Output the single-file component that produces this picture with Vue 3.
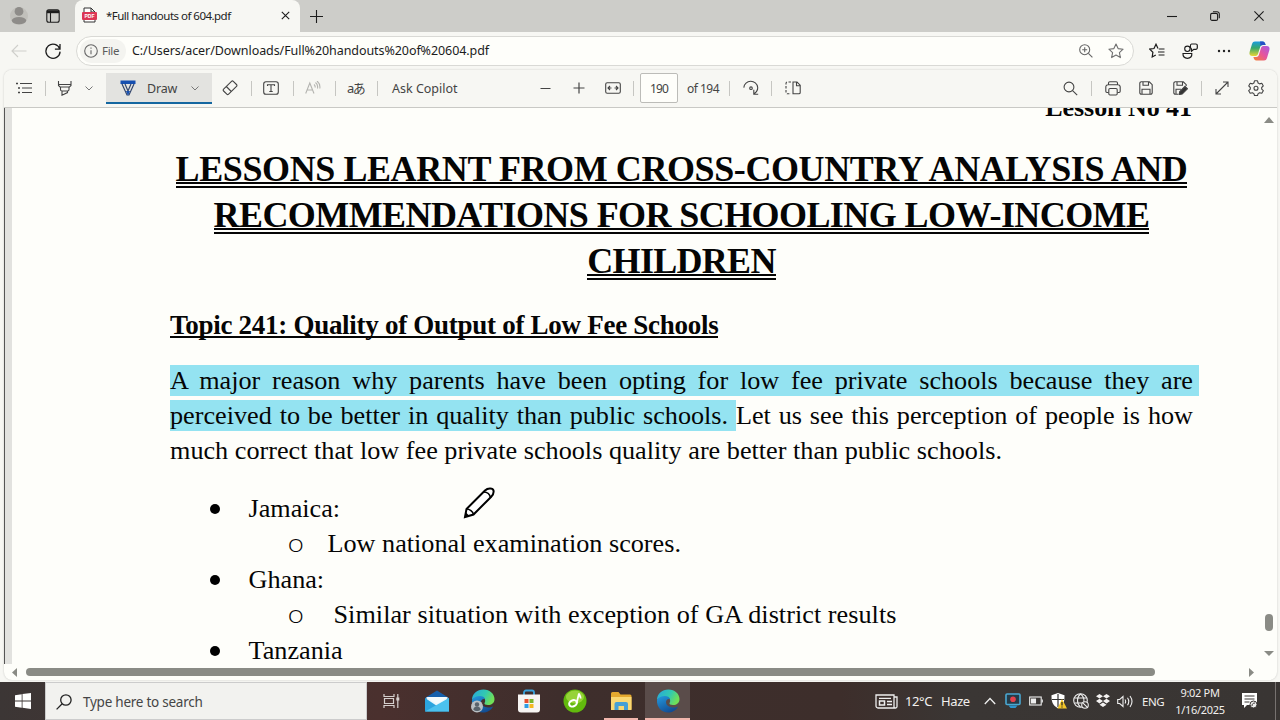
<script setup>
const sections = [
  { name: 'Jamaica:', note: 'Low national examination scores.', cls: 'jamaica' },
  { name: 'Ghana:', note: 'Similar situation with exception of GA district results', cls: 'ghana' },
  { name: 'Tanzania', note: '', cls: 'tanzania' },
]
</script>

<template>
  <div class="screen">
    <header class="tabstrip">
      <svg class="avatar" width="18" height="22" viewBox="0 0 18 22"><circle cx="9" cy="11" r="9" fill="#c1c0bb"/><circle cx="9" cy="6.400" r="4.400" fill="#8e8c89"/><ellipse cx="9" cy="15.600" rx="7.200" ry="3.700" fill="#8e8c89"/></svg>
      <svg class="ln dark" width="14" height="14" viewBox="0 0 14 14"><rect x=".8" y=".8" width="12.400" height="12.400" rx="2"/><path d="M1 2.700h12" stroke-width="3"/><path d="M4.500 3v10"/></svg>
      <div class="tab">
        <svg width="15" height="16" viewBox="0 0 15 16"><path d="M2 5V1h7l4 4v10H2v-3" fill="#fff" stroke="#333" stroke-width="1"/><path d="M9 1v4h4" fill="none" stroke="#333"/><rect y="5" width="15" height="8" rx="1" fill="#dc3654"/><text x="7.5" y="11" text-anchor="middle" class="pdf">PDF</text></svg>
        <span class="tabtitle">*Full handouts of 604.pdf</span>
        <svg class="ln dark" width="9" height="9" viewBox="0 0 9 9"><path d="M.8.8l7.400 7.400M8.200.8L.8 8.200"/></svg>
      </div>
      <svg class="ln dark" width="13" height="13" viewBox="0 0 13 13"><path d="M6.500 0v13M0 6.500h13"/></svg>
      <svg class="ln dark" width="10" height="10" viewBox="0 0 10 10"><path d="M0 5.500h10"/></svg>
      <svg class="ln dark" width="10" height="10" viewBox="0 0 10 10"><rect x=".6" y="2.400" width="7" height="7" rx="1.500"/><path d="M3 .7h4a2.200 2.200 0 0 1 2.300 2.200v4.300"/></svg>
      <svg class="ln dark" width="10" height="10" viewBox="0 0 10 10"><path d="M.4.4l9.200 9.200M9.600.4L.4 9.600"/></svg>
    </header>

    <nav class="address">
      <svg class="ln" width="16" height="14" viewBox="0 0 16 14" stroke="#cfcfcb"><path d="M15.500 7H1M7 1L1 7l6 6"/></svg>
      <svg class="ln dark" width="16" height="16" viewBox="0 0 16 16"><path d="M14.800 6.100A7.100 7.100 0 1 0 15.100 8.600M15 1v5.200H9.900" stroke-width="1.300"/></svg>
      <div class="urlbox">
        <div class="filechip">
          <svg class="ln" width="14" height="14" viewBox="0 0 14 14" stroke="#666"><circle cx="7" cy="7" r="6.300"/><path d="M7 6.200v4M7 3.500v1.300"/></svg>
          <span>File</span>
        </div>
        <span class="url">C:/Users/acer/Downloads/Full%20handouts%20of%20604.pdf</span>
        <svg class="ln" width="14" height="14" viewBox="0 0 14 14" stroke="#666"><circle cx="5.700" cy="5.700" r="5"/><path d="M9.400 9.400L13.400 13.400M3.200 5.700h5M5.700 3.200v5"/></svg>
        <svg class="ln star" width="16" height="16" viewBox="0 0 16 16" stroke="#707070"><path d="M8 1l2.100 4.600 5 .6-3.700 3.400 1 5L8 12.100 3.600 14.600l1-5L.9 6.200l5-.6z" stroke-linejoin="round"/></svg>
      </div>
      <svg class="ln dark" width="16" height="16" viewBox="0 0 16 16"><path d="M9 5.500L7 1.200 5 5.500l-4.300.6L3.900 9.200 3.200 14l3.600-2M9.800 6h5.700M9 9h6.500M9.600 12h5.900" stroke-width="1.200"/></svg>
      <svg class="ln dark" width="16" height="16" viewBox="0 0 16 16"><circle cx="5.400" cy="5.800" r="2.700"/><path d="M1 10.500h8.800c.3 3-1.400 4.800-4.400 4.800S.8 13.500 1 10.500zM9.500 1h4.300a1.500 1.500 0 0 1 1.500 1.500v2.300a1.500 1.500 0 0 1-1.500 1.500h-2L9.500 8.300V6C8 5 8 1 9.500 1z" stroke-width="1.200"/></svg>
      <svg width="14" height="4" viewBox="0 0 14 4" fill="#222"><circle cx="2" cy="2" r="1.200"/><circle cx="7" cy="2" r="1.200"/><circle cx="12" cy="2" r="1.200"/></svg>
      <svg width="21" height="20" viewBox="0 0 21 20">
        <defs>
          <linearGradient id="cpa" x1="0" y1="0" x2="0" y2="1"><stop offset="0" stop-color="#1a9be0"/><stop offset=".45" stop-color="#36a86b"/><stop offset="1" stop-color="#e9d534"/></linearGradient>
          <linearGradient id="cpb" x1="1" y1="0" x2="0" y2="1"><stop offset="0" stop-color="#a45be6"/><stop offset=".5" stop-color="#e7559b"/><stop offset="1" stop-color="#f4822f"/></linearGradient>
        </defs>
        <path d="M6 .5h7.500c2 0 2.500 1.500 3.100 3.500h-2.800c-1.500 0-2.200.7-2.700 2.200L9 13c-.6 1.600-1.500 2-2.800 2H3.500C1 15 0 13.500.6 11L3 3C3.500 1.300 4.500.5 6 .5z" fill="url(#cpa)"/>
        <path d="M15 19.500H7.500c-2 0-2.500-1.500-3.100-3.500h2.800c1.500 0 2.200-.7 2.700-2.200L12 7c.6-1.600 1.500-2 2.800-2h2.700c2.500 0 3.500 1.500 2.900 4L18 17c-.5 1.700-1.500 2.500-3 2.500z" fill="url(#cpb)"/>
        <path d="M11 .5h2.500c2 0 2.500 1.500 3.100 3.500h-2.800c-1 0-1.700.4-2.200 1.200z" fill="#2550c5"/>
      </svg>
    </nav>

    <section class="viewer">
      <div class="toolbar">
        <svg class="ln" width="17" height="12" viewBox="0 0 17 12"><path d="M4 1.500h12M6 6h10M6 10.500h10"/><path d="M0 1.500h2M2 6h2M2 10.500h2" stroke-width="1.600"/></svg>
        <i class="sep"></i>
        <svg class="ln" width="16" height="16" viewBox="0 0 16 16"><path d="M1.500 1v4.500L3 7h9.500L14 5.500V1M1.500 4.500H14M3.500 7.200v2.300a1.500 1.500 0 0 0 1.500 1.500h5.500a1.500 1.500 0 0 0 1.500-1.500V7.200M5 11v4.200l5.500-2.600V11"/></svg>
        <svg class="ln thin" width="8" height="5" viewBox="0 0 8 5"><path d="M.5.5L4 4 7.500.5"/></svg>
        <div class="draw">
          <svg width="16" height="16" viewBox="0 0 16 16"><path d="M.5.500h15v3.500h-15z" fill="#164fb0"/><path d="M2 4l5 11h2l5-11M5 4l3 7 3-7" fill="none" stroke="#33466d" stroke-width="1.200"/><path d="M6 11h4l-2 4.500z" fill="#164fb0"/></svg>
          <span>Draw</span>
          <svg class="ln thin" width="8" height="5" viewBox="0 0 8 5"><path d="M.5.5L4 4 7.500.5"/></svg>
        </div>
        <svg class="ln" width="16" height="16" viewBox="0 0 16 16"><path d="M9.500 1.300L1.600 9.200a1.300 1.300 0 0 0 0 1.800l3.200 3.200a1.300 1.300 0 0 0 1.800 0l7.900-7.900a1.300 1.300 0 0 0 0-1.800l-3.200-3.200a1.300 1.300 0 0 0-1.800 0zM4.300 6.500l5 5"/></svg>
        <i class="sep"></i>
        <svg class="ln" width="16" height="14" viewBox="0 0 16 14"><rect x=".7" y=".7" width="14.600" height="12.600" rx="2.300"/><path d="M4.500 5V3.800h7V5M8 3.800v6.800M6.300 10.500h3.400"/></svg>
        <i class="sep"></i>
        <svg class="ln pale" width="16" height="14" viewBox="0 0 16 14"><path d="M.7 12.500L4.800 2l4.200 10.500M2.100 9h5.500M9 3.500c1 .8 1.300 2 1 3M10.500 1.500c2 1.500 2.500 3.500 2 6M12 0c2.500 2 3.300 4.500 2.800 7.500"/></svg>
        <i class="sep"></i>
        <span class="translate">aあ</span>
        <i class="sep"></i>
        <span class="ask">Ask Copilot</span>
        <svg class="ln" width="11" height="11" viewBox="0 0 11 11"><path d="M.5 5.500h10"/></svg>
        <svg class="ln" width="12" height="12" viewBox="0 0 12 12"><path d="M.5 6h11M6 .5v11" stroke-width="1.200"/></svg>
        <svg class="ln" width="16" height="12" viewBox="0 0 16 12"><rect x=".7" y=".7" width="14.600" height="10.600" rx="1.500"/><path d="M3 6h3.500M9.500 6H13M5 4L3 6l2 2M11 4l2 2-2 2"/></svg>
        <i class="sep"></i>
        <span class="pageno">190</span>
        <span class="total">of 194</span>
        <i class="sep"></i>
        <svg class="ln" width="16" height="16" viewBox="0 0 16 16"><path d="M.8 7.600A7 7 0 0 1 14.700 7.300c.2 2.600-1 4.600-3.200 6.200M10.800 9.800v4.400h4.400"/><circle cx="8" cy="8.200" r="1.300"/></svg>
        <i class="sep"></i>
        <svg class="ln" width="16" height="14" viewBox="0 0 16 14"><path d="M8 1h4l3.200 3.200V11.500a1.300 1.300 0 0 1-1.300 1.300H8zM11.500 1v3.700H15"/><path d="M6 1H2.500A1.500 1.500 0 0 0 1 2.500v9a1.500 1.500 0 0 0 1.500 1.300H6" stroke-dasharray="2.500 1.500"/></svg>
        <svg class="ln" width="15" height="15" viewBox="0 0 15 15"><circle cx="6" cy="6" r="4.900"/><path d="M9.600 9.600l4.600 4.600"/></svg>
        <i class="sep"></i>
        <svg class="ln" width="16" height="15" viewBox="0 0 16 15"><path d="M3.500 3.500V2A1.300 1.300 0 0 1 4.800.8h6.400A1.300 1.300 0 0 1 12.500 2v1.500M3.500 11.500H2A1.300 1.300 0 0 1 .8 10.200V6A2.200 2.200 0 0 1 3 3.800h10A2.200 2.200 0 0 1 15.200 6v4.200a1.300 1.300 0 0 1-1.200 1.300h-1.500"/><rect x="3.800" y="7.500" width="8.400" height="6.500" rx="1.200"/></svg>
        <svg class="ln" width="14" height="14" viewBox="0 0 14 14"><path d="M2.300.8h8l2.900 2.900v8a1.500 1.500 0 0 1-1.500 1.500H2.300A1.500 1.500 0 0 1 .8 11.700V2.300A1.500 1.500 0 0 1 2.300.8zM4 1v3.300h5.500V1M3 13V8.300h8V13"/></svg>
        <svg class="ln" width="15" height="14" viewBox="0 0 15 14"><path d="M5 13.200H2.300A1.500 1.500 0 0 1 .8 11.700V2.300A1.500 1.500 0 0 1 2.300.8h8l2.900 2.900V5M4 1v3.300h5.500V1M3 13V8.300h5"/><path d="M6 13.600l.8-3L12 5.400l2.400 2.400L9.200 13z" fill="#333"/></svg>
        <i class="sep"></i>
        <svg class="ln" width="14" height="14" viewBox="0 0 14 14"><path d="M1 13L13 1M8 1h5v5M1 8v5h5"/></svg>
        <svg class="ln" width="16" height="16" viewBox="0 0 16 16"><path d="M6.500.8h3l.6 2.200 1.500.9 2.200-.6 1.500 2.600L13.700 7.500v1.600l1.600 1.600-1.500 2.600-2.200-.6-1.500.9-.6 1.900h-3l-.6-1.900-1.500-.9-2.200.6-1.500-2.600L2.300 9.100V7.500L.7 5.900l1.500-2.600 2.200.6L5.900 3z" stroke-linejoin="round"/><circle cx="8" cy="8.300" r="2"/></svg>
      </div>

      <div class="paper">
        <div class="gutter"></div>
        <main class="doc">
          <div class="lesson"><span>Lesson No 41</span></div>
          <h1>
            <span class="t1">LESSONS LEARNT FROM CROSS-COUNTRY ANALYSIS AND</span>
            <span class="t2">RECOMMENDATIONS FOR SCHOOLING LOW-INCOME</span>
            <span class="t3">CHILDREN</span>
          </h1>
          <h2><span>Topic 241: Quality of Output of Low Fee Schools</span></h2>
          <p>
            <span class="line first"><mark>A major reason why parents have been opting for low fee private schools because they are</mark></span>
            <span class="line second"><mark>perceived to be better in quality than public schools. </mark>Let us see this perception of people is how</span>
            <span class="line third">much correct that low fee private schools quality are better than public schools.</span>
          </p>
          <ul>
            <li v-for="s in sections" :key="s.name" :class="s.cls">
              <div class="item"><i class="dot"></i><span>{{ s.name }}</span></div>
              <div v-if="s.note" class="sub"><span class="ring">o</span><span class="note">{{ s.note }}</span></div>
            </li>
          </ul>
          <svg class="cursor" width="32" height="32" viewBox="0 0 32 32"><path d="M2 30l1.500-8L22 3.500C25 .5 30 1 30.500 3.500 31 6 30 8 28 10L10.500 27.500z" fill="#fff" stroke="#000" stroke-width="2"/><path d="M3.500 22c3 0 6.500 2.500 7 5.500M20.500 5c4 0 6.500 2.500 7 6" fill="none" stroke="#000" stroke-width="1.600"/><path d="M2 30l1-4.500 3 3z"/></svg>
        </main>
        <div class="vbar">
          <svg width="10" height="6" viewBox="0 0 10 6"><path d="M0 6l5-6 5 6z" fill="#8a8b85"/></svg>
          <i class="vthumb"></i>
          <svg width="10" height="5" viewBox="0 0 10 5"><path d="M0 0h10L5 5z" fill="#8a8b85"/></svg>
        </div>
      </div>
      <div class="hbar">
        <svg width="5" height="9" viewBox="0 0 5 9"><path d="M5 0v9L0 4.500z" fill="#8a8b85"/></svg>
        <i class="hthumb"></i>
        <svg width="5" height="9" viewBox="0 0 5 9"><path d="M0 0v9l5-4.500z" fill="#8a8b85"/></svg>
      </div>
    </section>

    <footer class="taskbar">
      <div class="start"><svg width="16" height="16" viewBox="0 0 16 16" fill="#fff"><path d="M0 2.200L6.700 1.200v6.400H0zM7.500 1.100L16 0v7.600H7.500zM0 8.400h6.700v6.400L0 13.800zM7.500 8.400H16V16l-8.500-1.200z"/></svg></div>
      <div class="search">
        <svg class="ln" width="16" height="16" viewBox="0 0 16 16" stroke="#222"><circle cx="9.900" cy="6" r="5.200" stroke-width="1.300"/><path d="M6.200 9.800L.6 15.400" stroke-width="1.300"/></svg>
        <span>Type here to search</span>
      </div>
      <div class="apps">
        <div class="app"><svg class="ln taskview" width="17" height="16" viewBox="0 0 17 16" stroke="#e6e2e0"><path d="M1 1v2.500h10V1M1 15v-2.500h10V15M1.500 5.500h9v5h-9zM14.800 1v14" stroke-width="1.200"/><path d="M13.300 6h3" stroke-width="3"/></svg></div>
        <div class="app"><svg width="24" height="22" viewBox="0 0 24 22"><path d="M0 8L12 .5 24 8v3H0z" fill="#1660ac"/><path d="M1.500 7.500h21V17h-21z" fill="#e9f6fb"/><path d="M0 8l12 8 12-8v13.500H0z" fill="#2ba4de"/><path d="M0 21.500L24 8v13.500z" fill="#4bc1ee"/><path d="M1 7l11 7 11-7z" fill="#f4fbfd"/></svg></div>
        <div class="app"><svg width="24" height="24" viewBox="0 0 24 24">
          <defs><linearGradient id="eg" x1="0" y1="0" x2="1" y2=".4"><stop offset="0" stop-color="#27a5df"/><stop offset=".6" stop-color="#32c9b0"/><stop offset="1" stop-color="#70df58"/></linearGradient><linearGradient id="eb" x1="0" y1="0" x2=".6" y2="1"><stop offset="0" stop-color="#249be0"/><stop offset="1" stop-color="#124b91"/></linearGradient></defs>
          <path d="M1 11C1 5 6 .5 12.500.5 19 .5 23.500 5 23.500 10c0 4-3 6-6.500 6-2.500 0-4-1-3.500-2 1.500-2 .8-6-4-6C5 8 2 9.500 1 11z" fill="url(#eg)"/><path d="M1 11c1.500-2.500 4.500-4 8-4 2.500 0 4.500 1.300 5 3-5.500-1-6 8 3 8.500 2 .1 4-.5 5-1-2 4-6 6-10 6C5.500 23.500.5 18 1 11z" fill="url(#eb)"/>
          <circle cx="6" cy="17.500" r="6" fill="#b9bfc3"/><circle cx="6" cy="15.500" r="2.200" fill="#59636c"/><path d="M2.300 20.500c.4-4 7-4 7.400 0-2 2-5.400 2-7.400 0z" fill="#59636c"/></svg></div>
        <div class="app"><svg width="24" height="24" viewBox="0 0 24 24"><path d="M7 7V3.500A2 2 0 0 1 9 1.500h6a2 2 0 0 1 2 2V7" fill="none" stroke="#3aa2dc" stroke-width="1.800"/><path d="M1 5.500h22v15a3 3 0 0 1-3 3H4a3 3 0 0 1-3-3z" fill="#f7f5f3"/><path d="M7.500 10h4v4h-4z" fill="#e8512f"/><path d="M12.500 10h4v4h-4z" fill="#79b62c"/><path d="M7.500 15h4v4h-4z" fill="#2e9de4"/><path d="M12.500 15h4v4h-4z" fill="#f4b81f"/></svg></div>
        <div class="app"><svg width="24" height="24" viewBox="0 0 24 24"><circle cx="12" cy="12" r="11.500" fill="#62b90d"/><ellipse cx="12" cy="8" rx="9" ry="6.500" fill="#96d338"/><ellipse cx="10" cy="14.300" rx="4" ry="3" fill="none" stroke="#fff" stroke-width="2" transform="rotate(-25 10 14.300)"/><path d="M13.500 14.500L16 4.500c.3 2 2 2.500 1.500 5" fill="none" stroke="#fff" stroke-width="1.800"/></svg></div>
        <div class="app running"><svg width="22" height="20" viewBox="0 0 22 20"><path d="M1 2.500A1.500 1.500 0 0 1 2.500 1h6l2 2.500H20A1.500 1.500 0 0 1 21.500 5v13.500H1z" fill="#e5a92f"/><path d="M1 6h20.500v13H1z" fill="#fad873"/><path d="M4.500 19v-6A2 2 0 0 1 6.500 11h9.500a2 2 0 0 1 2 2v6h-4v-4h-5.500v4z" fill="#45a0d6"/></svg></div>
        <div class="app running active"><svg width="24" height="24" viewBox="0 0 24 24"><path d="M1 11C1 5 6 .5 12.500.5 19 .5 23.500 5 23.500 10c0 4-3 6-6.500 6-2.500 0-4-1-3.500-2 1.500-2 .8-6-4-6C5 8 2 9.500 1 11z" fill="url(#eg)"/><path d="M1 11c1.500-2.500 4.500-4 8-4 2.500 0 4.500 1.300 5 3-5.500-1-6 8 3 8.500 2 .1 4-.5 5-1-2 4-6 6-10 6C5.500 23.500.5 18 1 11z" fill="url(#eb)"/></svg></div>
      </div>
      <div class="tray">
        <svg class="ln" width="23" height="15" viewBox="0 0 23 15" stroke="#eee"><path d="M1 1h18v13H3a2 2 0 0 1-2-2zM19 3h3v9.500a1.500 1.500 0 0 1-3 0M4 4.300h12M12 7.500h5M12 10.500h5" stroke-width="1.300"/><rect x="4.500" y="7" width="5" height="4" stroke-width="1.500"/></svg>
        <span class="temp">12°C</span><span class="haze">Haze</span>
        <svg class="ln" width="12" height="8" viewBox="0 0 12 8" stroke="#eee"><path d="M.8 7L6 1.500 11.200 7" stroke-width="1.300"/></svg>
        <svg width="16" height="16" viewBox="0 0 16 16"><rect x="1" y="1" width="14" height="10.500" rx="1" fill="#263b48" stroke="#4aa8d2" stroke-width="1.600"/><circle cx="8" cy="6.200" r="2.800" fill="#e3424c"/><path d="M3.500 12.500h9L10.500 15h-5z" fill="#2b96d0"/></svg>
        <svg class="ln" width="14" height="10" viewBox="0 0 14 10" stroke="#eee"><rect x=".7" y="1" width="11.500" height="8"/><path d="M13.300 3.500v3"/><path d="M2.500 3h4v4h-4z" fill="#eee"/></svg>
        <svg width="16" height="16" viewBox="0 0 16 16"><path d="M7 0l6.500 2.200c0 6-.5 10-6.500 13C1 12 .5 8 .5 2.200z" fill="#fff"/><path d="M7 1v13M1 6.500h12" stroke="#333" stroke-width="1.200"/><path d="M11 6l5 9.500H6.500z" fill="#f3c62a"/><path d="M11 9v3.500M11 13.500v1" stroke="#222" stroke-width="1.200"/></svg>
        <svg class="ln" width="16" height="16" viewBox="0 0 16 16" stroke="#eee"><circle cx="7.500" cy="7.500" r="6.800"/><path d="M7.500 1C3.500 4 3.500 11 7.500 14M7.500 1c2.800 2 3.800 5 3.400 8M1.500 5h12M1.500 10H9"/><circle cx="12" cy="12" r="3.300" fill="#3b3634"/><path d="M9.800 9.800l4.400 4.400"/></svg>
        <svg width="14" height="14" viewBox="0 0 14 14" fill="#f4f2f1"><path d="M3.500 0L7 2.300 3.500 4.600 0 2.300zM10.500 0L14 2.300 10.500 4.600 7 2.300zM3.500 4.800L7 7.100 3.500 9.400 0 7.100zM10.500 4.800L14 7.100l-3.500 2.300L7 7.100zM7 8.400l3.500 2.300L7 13l-3.500-2.300z"/></svg>
        <svg class="ln" width="17" height="13" viewBox="0 0 17 13" stroke="#eee"><path d="M.7 4.500h2L6 1.500v10l-3.300-3h-2zM8 4.500q1.300 2 0 4M10.500 2.800q2.500 3.700 0 7.400M13 1q4 5.500 0 11"/></svg>
        <span class="lang">ENG</span>
        <div class="clock"><span class="time">9:02 PM</span><span class="date">1/16/2025</span></div>
        <svg width="16" height="16" viewBox="0 0 16 16"><path d="M0 0h15v12H5l-3 3v-3H0z" fill="#fff"/><path d="M2.500 3h10M2.500 6h10M2.500 9h5" stroke="#3a3634" stroke-width="1.200"/><circle cx="11.500" cy="11.500" r="3.500" fill="#eee" stroke="#3a3634"/><path d="M10 13c0-2 1-3 3-3" fill="none" stroke="#3a3634"/></svg>
        <i class="peek"></i>
      </div>
    </footer>
  </div>
</template>

<style>
body { margin: 0; overflow: hidden; }
</style>

<style scoped>
* { box-sizing: border-box; }
.screen { width: 1280px; height: 720px; display: flex; flex-direction: column; overflow: hidden; background: #f7f7f3; font-family: "Noto Sans", "Noto Sans CJK JP", sans-serif; font-size: 12px; color: #222; }
svg { display: block; flex: none; }
.ln { fill: none; stroke-width: 1.1; }
.ln:not([stroke]) { stroke: #444; }
.ln.dark { stroke: #1c1c1c; }
.ln.pale { stroke: #b4b4b0; }
.ln.thin { stroke: #777; stroke-width: 1; }
.taskview { opacity: .9; }
span { white-space: pre; }

.tabstrip { height: 32px; flex: none; background: #cdcdc9; display: grid; grid-template-columns: 36px 29px 235px 857px 43px 44px 1fr; padding-left: 10px; align-items: center; }
.tab { height: 32px; width: 225px; background: #f7f7f3; border-radius: 8px 8px 0 0; display: grid; grid-template-columns: 24px 175px 1fr; align-items: center; padding: 0 0 2px 7px; }
.tabtitle { font-size: 11.500px; letter-spacing: -.52px; }
.pdf { font: bold 5px "Liberation Sans", sans-serif; fill: #fff; }

.address { height: 38px; flex: none; display: grid; grid-template-columns: 34px 31px 1073px 33px 35px 32px 1fr; padding-left: 11px; align-items: center; }
.urlbox { width: 1058px; height: 30px; border: 1px solid #d9d9d5; border-radius: 15px; background: #fefefa; display: grid; grid-template-columns: 52px 947px 29px 1fr; align-items: center; padding-left: 3px; }
.filechip { width: 46px; height: 24px; border-radius: 12px; background: #f4f4f0; display: flex; align-items: center; gap: 4px; padding: 0 0 1px 4px; color: #5c5c5c; font-size: 11.500px; letter-spacing: -.3px; }
.url { color: #1c1c1c; font-size: 12.500px; letter-spacing: -.07px; padding-bottom: 1px; }

.viewer { width: 1273px; height: 610px; margin-left: 4px; flex: none; background: #fefefa; border-radius: 8px; overflow: hidden; box-shadow: 0 0 2px #c4c4c0; display: flex; flex-direction: column; }
.toolbar { height: 38px; flex: none; background: #f7f7f3; border-bottom: 1px solid #c9c9c5; display: grid; align-items: center; padding: 0 0 1px 12px; grid-template-columns: 29px 12px 28px 21px 116px 29px 12px 30px 12px 30px 12px 30px 15px 148px 33px 32px 28px 7px 47px 42px 14px 28px 14px 278px 28px 14px 34px 34px 28px 14px 33px 1fr; }
.sep { width: 1px; height: 15px; background: #c6c6c2; }
.draw { width: 106px; height: 31px; margin-top: 1px; background: #e3e3e0; border-bottom: 2px solid #1467a0; display: grid; grid-template-columns: 27px 44px 1fr; padding: 1px 0 0 14px; align-items: center; color: #444; font-size: 12.500px; letter-spacing: -.2px; }
.translate { font-size: 13px; letter-spacing: -1.500px; color: #444; padding-bottom: 1px; }
.ask { font-size: 12.500px; color: #444; }
.total { font-size: 12px; letter-spacing: -.5px; color: #444; }
.pageno { width: 38px; height: 30px; line-height: 29px; background: #fefefa; border: 1px solid #bcbcb8; border-radius: 2px; text-align: center; font-size: 12px; letter-spacing: -.9px; color: #444; }

.paper { height: 556px; flex: none; display: flex; overflow: hidden; }
.gutter { width: 8px; border-left: 1px solid #555; background: #e2e2df; flex: none; }
.doc { position: relative; width: 1250px; flex: none; padding-left: 158px; font-family: "Liberation Serif", serif; font-size: 26.200px; color: #050505; overflow: hidden; }
.vbar { width: 14px; flex: none; display: flex; flex-direction: column; align-items: center; padding-top: 9px; }
.vthumb { width: 8px; height: 17px; border-radius: 4px; background: #8a8b85; margin: 491px 0 20px; }
.lesson { width: 1022px; height: 20px; display: flex; justify-content: flex-end; align-items: flex-end; line-height: 20px; font-weight: bold; font-size: 26px; letter-spacing: -.05px; }
.lesson span { margin-bottom: 10px; }
h1 { margin: 28px 0 0; width: 1023px; font-size: 36px; font-weight: bold; display: flex; flex-direction: column; align-items: center; }
h1 span { line-height: 26px; height: 32px; border-bottom: 6px double #050505; margin-bottom: 14px; }
.t1 { letter-spacing: -.41px; }
.t2 { letter-spacing: -.58px; }
.t3 { letter-spacing: -.7px; }
h2 { margin: 18px 0 0; font-size: 27px; height: 26px; display: flex; letter-spacing: -.28px; }
h2 span { line-height: 26px; height: 26px; border-bottom: 2px solid #050505; }
p { margin: 26px 0 0; display: flex; flex-direction: column; }
.line { height: 34.700px; line-height: 34.700px; white-space: nowrap; width: 1023px; }
.first { width: 1029px; text-align-last: justify; white-space: normal; }
.first mark { padding-right: 6px; }
.second { text-align-last: justify; white-space: normal; }
.third { line-height: 36px; letter-spacing: .01px; }
mark { background: #94e3f1; color: #050505; padding: 1px 0; }
ul { list-style: none; margin: 22px 0 0; padding: 0; }
li { height: 71px; padding-left: 40px; }
.item, .sub { display: flex; align-items: center; height: 36px; line-height: 38px; }
.item { padding-top: 1px; }
.sub { height: 35px; line-height: 35px; padding-left: 78px; }
.dot { width: 10px; height: 10px; border-radius: 50%; background: #000; margin-right: 28.500px; }
.ring { width: 39.500px; font: 200 23px "DejaVu Sans Light", "DejaVu Sans", sans-serif; transform: scaleX(1.25); transform-origin: 0 50%; margin-left: -1px; margin-right: 1px; }
.ghana .note { margin-left: 6px; letter-spacing: .04px; }
.cursor { position: absolute; left: 451px; top: 379px; }
.hbar { height: 16px; display: grid; grid-template-columns: 14px 1223px 1fr; padding-left: 8px; align-items: center; }
.hthumb { width: 1129px; height: 8px; border-radius: 4px; background: #8a8b85; }

.taskbar { height: 38px; flex: none; margin-top: 2px; display: flex; color: #f2f0ee; background: linear-gradient(90deg, #3c3635 0, #4a302e 380px, #3e2e2c 560px, #3d2e2b 840px, #3a3634 960px, #393533 100%); }
.start { width: 45px; display: grid; place-items: center; }
.search { width: 322px; background: #f2f2ef; border: 1px solid #ccc; display: grid; grid-template-columns: 27px 1fr; align-items: center; padding: 1px 0 0 10px; color: #454545; font-size: 13.500px; letter-spacing: -.25px; }
.apps { display: flex; padding-left: 1px; }
.app { width: 46px; display: grid; place-items: center; position: relative; }
.running::after { content: ""; position: absolute; left: 6px; right: 6px; bottom: 0; height: 2px; background: #f1b6ad; }
.active { width: 45px; margin-left: 1px; background: #5a4c4a; }
.active::after { left: 0; right: 0; }
.tray { flex: 1; padding-left: 185px; display: grid; grid-template-columns: 30px 36px 43px 21px 24px 22px 22px 23px 21px 25px 28px 72px 33px 1fr; align-items: center; }
.peek { width: 1px; height: 38px; background: #777270; }
.temp, .haze { font-size: 13px; letter-spacing: -.4px; }
.lang { font-size: 11.500px; letter-spacing: -.4px; }
.clock { width: 60px; display: flex; flex-direction: column; align-items: center; font-size: 11px; line-height: 17px; letter-spacing: -.3px; }
</style>
